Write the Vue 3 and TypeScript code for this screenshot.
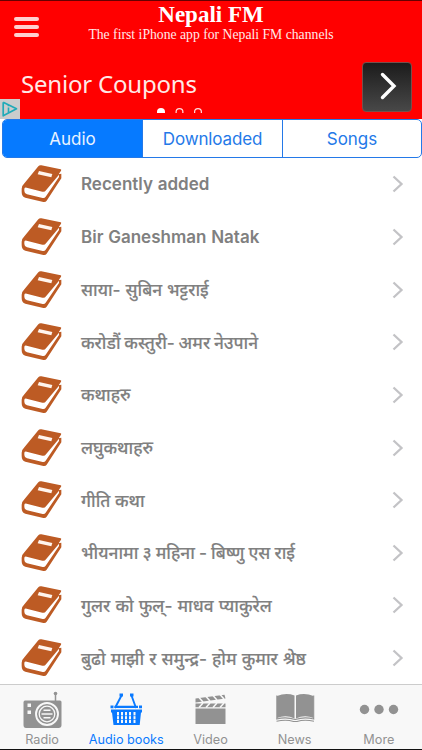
<script setup lang="ts">
interface Book {
  title: string
  spacing: number
  nepali: boolean
}

const books: Book[] = [
  { title: 'Recently added', spacing: 0.5, nepali: false },
  { title: 'Bir Ganeshman Natak', spacing: 0.5, nepali: false },
  { title: 'साया- सुबिन भट्टराई', spacing: 0.3, nepali: true },
  { title: 'करोडौं कस्तुरी- अमर नेउपाने', spacing: -0.8, nepali: true },
  { title: 'कथाहरु', spacing: 0, nepali: true },
  { title: 'लघुकथाहरु', spacing: 0, nepali: true },
  { title: 'गीति कथा', spacing: 0, nepali: true },
  { title: 'भीयनामा ३ महिना - बिष्णु एस राई', spacing: -0.5, nepali: true },
  { title: 'गुलर को फुल्- माधव प्याकुरेल', spacing: 0.5, nepali: true },
  { title: 'बुढो माझी र समुन्द्र- होम कुमार श्रेष्ठ', spacing: 0.5, nepali: true },
]

const segments: string[] = ['Audio', 'Downloaded', 'Songs']
const tabs: string[] = ['Radio', 'Audio books', 'Video', 'News', 'More']
const activeTab = 'Audio books'
</script>

<template>
  <div class="screen">
    <header class="header">
      <div class="bar">
        <div class="menu"><i /><i /><i /></div>
        <div class="heading">
          <h1>Nepali FM</h1>
          <p>The first iPhone app for Nepali FM channels</p>
        </div>
      </div>
      <div class="ad">
        <span class="ad-text">Senior Coupons</span>
        <button class="ad-go">
          <svg width="50" height="50" viewBox="0 0 50 50"><path d="M20.500 12.500 32 24 20.500 35.500" fill="none" stroke="#fff" stroke-width="3.400" stroke-linecap="round" stroke-linejoin="miter" /></svg>
        </button>
        <svg class="dots" width="50" height="6" viewBox="0 0 50 6">
          <circle cx="6" cy="5" r="4" fill="#fff" />
          <circle cx="24.500" cy="5" r="3.400" fill="none" stroke="#ffdede" stroke-width="1.200" />
          <circle cx="43" cy="5" r="3.400" fill="none" stroke="#ffdede" stroke-width="1.200" />
        </svg>
        <svg class="choices" width="20" height="20" viewBox="0 0 20 20">
          <rect width="20" height="20" fill="#ccc" />
          <path d="M3.200 3.200v13.600L16.500 9.800 3.200 3.200" fill="none" stroke="#20aab8" stroke-width="1.700" stroke-linejoin="round" />
          <path d="M8.500 8.500v5M8.500 5.900v1.300" stroke="#20aab8" stroke-width="1.600" />
        </svg>
      </div>
    </header>

    <nav class="segments">
      <span v-for="(s, i) in segments" :key="s" :class="{ selected: i === 0 }">{{ s }}</span>
    </nav>

    <ul class="list">
      <li v-for="b in books" :key="b.title">
        <svg class="book" width="42" height="40" viewBox="63 148 126 120">
          <path d="M115 155Q118 151 124 152L182 164Q185 165 183 168L176 179 184 177V191L140 258Q137 263 130 262L76 249Q65 246 65 232V222Q65 213 72 207Z" fill="#bd5b24" />
          <path d="M73 222Q74 218 80 219L127 231Q134 233 138 227L177 180V187L137 246Q134 251 128 250L81 239Q73 236 73 229Z" fill="#fff" />
          <path d="M117 169 157 178 154 188 113 179Z" fill="#fff5ee" />
        </svg>
        <span class="title" :class="{ nepali: b.nepali }" :style="{ wordSpacing: b.spacing + 'px' }">{{ b.title }}</span>
        <svg class="chevron" width="12" height="18" viewBox="0 0 12 18"><path d="M1.500 1.500 9.500 9 1.500 16.500" fill="none" stroke="#c3c3c6" stroke-width="2.300" /></svg>
      </li>
    </ul>

    <footer class="tabs">
      <div v-for="t in tabs" :key="t" class="tab" :class="{ active: t === activeTab }">
        <svg width="42" height="40" viewBox="0 0 42 40" fill="currentColor">
          <g v-if="t === 'Radio'">
            <path d="M4 8.500H39Q40.500 8.500 40.500 10V33Q40.500 36 37.500 36H5Q2.500 36 2.500 33V10.500Q2.500 8.500 4 8.500Z" />
            <path d="M34.500 9V1" stroke="currentColor" stroke-width="1.500" />
            <circle cx="34.500" cy="1.500" r="1.800" />
            <g fill="none" stroke="#f8f8f8">
              <circle cx="26" cy="22" r="11" stroke-width="1.900" />
              <circle cx="26" cy="22" r="7.800" stroke-width="1.300" />
              <path d="M22.500 18.300h7M20.500 22h11M22.500 25.700h7" stroke-width="1.500" />
            </g>
            <path d="M6.500 11.500h3.500v3.500h-3.500zM6.500 18.500h3.500v3.500h-3.500z" fill="#f8f8f8" />
          </g>
          <g v-else-if="t === 'Audio books'">
            <path d="M10 16 16.500 3.500M31 16 26.500 3.500" fill="none" stroke="currentColor" stroke-width="1.900" />
            <path d="M14.500 1.500h3.500v3h-3.500zM25 1.500h3.500v3h-3.500zM5.500 13.500h3v2.700h-3zM34 13.500h3v2.700h-3zM9.500 13.700h23.500v2.300H9.500zM6 17.500h31v3h-1l-1.300 12.500H8.500L7 20.500h-1z" />
            <path d="M13 20v11M17 20v11M21 20v11M25 20v11M29.500 20v11" stroke="#f8f8f8" stroke-width="2" />
            <path d="M11 23.700h21M11 27.500h21" stroke="currentColor" stroke-width=".7" />
          </g>
          <g v-else-if="t === 'Video'">
            <path d="M6.500 16.500h30v15.500h-30zM6.500 11.500h30v3.700h-30zM6.500 6.500 35.500 2.700 36.500 6.500 6.500 10.500Z" />
            <path d="M10 15.500 14 11M17 15.500l4-4.500M24 15.500l4-4.500M31 15.500l4-4.500M10 5.500l4 4.500M17 4.500l4 4.500M24 3.500l4 4.500M31 2.500l4 4.500" stroke="#f8f8f8" stroke-width="1.500" />
          </g>
          <g v-else-if="t === 'News'">
            <path d="M3 4Q12 .5 20.500 3.500V26.500Q12 22.500 3 26ZM22 3.500Q30.500.5 39.500 4V26Q30.500 22.500 22 26.500Z" />
            <path d="M2.800 3.500V27Q12 24.500 21.200 27.500Q30.500 24.500 39.700 27V3.500M2.500 29.300Q12 27 19.500 29.500H23Q30.500 27 40 29.300" fill="none" stroke="currentColor" stroke-width="1.100" />
          </g>
          <g v-else>
            <circle cx="6.500" cy="17.500" r="4.700" />
            <circle cx="21" cy="17.500" r="4.700" />
            <circle cx="35.500" cy="17.500" r="4.700" />
          </g>
        </svg>
        <span>{{ t }}</span>
      </div>
    </footer>
  </div>
</template>

<style>
body { margin: 0; background: #fff; }
</style>

<style scoped>
* { box-sizing: border-box; }
.screen { width: 422px; height: 750px; display: flex; flex-direction: column; background: #fff; overflow: hidden; font-family: Inter, "Noto Sans", sans-serif; }
.header { height: 119px; flex: none; background: #f00; border-top: 1px solid #600; display: flex; flex-direction: column; }
.bar { height: 52px; display: grid; grid-template-columns: 1fr; position: relative; }
.menu { position: absolute; left: 14px; top: 16px; display: flex; flex-direction: column; gap: 4px; }
.menu i { display: block; width: 25px; height: 4px; border-radius: 2px; background: #ffcfcf; }
.heading { text-align: center; color: #fff; font-family: "Liberation Serif", serif; }
h1 { margin: 0; padding-top: 1px; font-size: 23px; line-height: 26px; font-weight: 700; }
p { margin: -1px 0 0; font-size: 13.700px; line-height: 15px; color: #ffe9e9; white-space: nowrap; }
.ad { flex: 1; position: relative; display: flex; justify-content: space-between; padding: 9px 10px 0 21px; }
.ad-text { font-family: "Noto Sans", sans-serif; font-size: 24px; line-height: 34px; padding-top: 5px; letter-spacing: -.2px; color: #ffe9e6; white-space: nowrap; }
.ad-go { width: 50px; height: 50px; padding: 0; border: 1px solid #77504c; border-radius: 4px; background: linear-gradient(#1c1c1c, #484848); overflow: hidden; }
.ad-go svg { display: block; margin: -1px; }
.dots { position: absolute; left: 155px; bottom: 6px; }
.choices { position: absolute; left: 0; bottom: 0; }
.segments { flex: none; height: 39px; margin-left: 2px; border: 1px solid #2479e8; border-radius: 5px; display: grid; grid-template-columns: 139px 140px 1fr; overflow: hidden; }
.segments span { display: flex; align-items: center; justify-content: center; font-size: 17px; color: #2479e8; border-left: 1px solid #2479e8; }
.segments span:first-child { border-left: 0; }
.segments .selected { background: #067aff; color: #e9f3ff; }
.segments span:nth-child(2) { letter-spacing: -.15px; }
.list { list-style: none; margin: 0; padding: 0; flex: 1; display: grid; grid-template-rows: repeat(10, 52.650px); }
.list li { display: flex; align-items: center; padding: 0 18px 0 21px; }
.book { flex: none; margin-right: 18px; }
.title { flex: 1; font-size: 17px; font-weight: 600; color: #808080; white-space: nowrap; }
.nepali { font-family: Inter, "Noto Sans", "Noto Sans Devanagari", sans-serif; font-size: 17.300px; font-weight: 500; -webkit-text-stroke: .15px #808080; }
.tabs { flex: none; height: 66px; border-top: 1px solid #ccc; border-bottom: 1px solid #111; background: #f8f8f8; display: grid; grid-template-columns: repeat(5, 84.200px); }
.tab { display: flex; flex-direction: column; align-items: center; color: #929292; font-size: 12.700px; line-height: 16px; white-space: nowrap; }
.tab svg { margin-top: 7px; overflow: visible; }
.tab.active { color: #0a7aff; }
</style>
